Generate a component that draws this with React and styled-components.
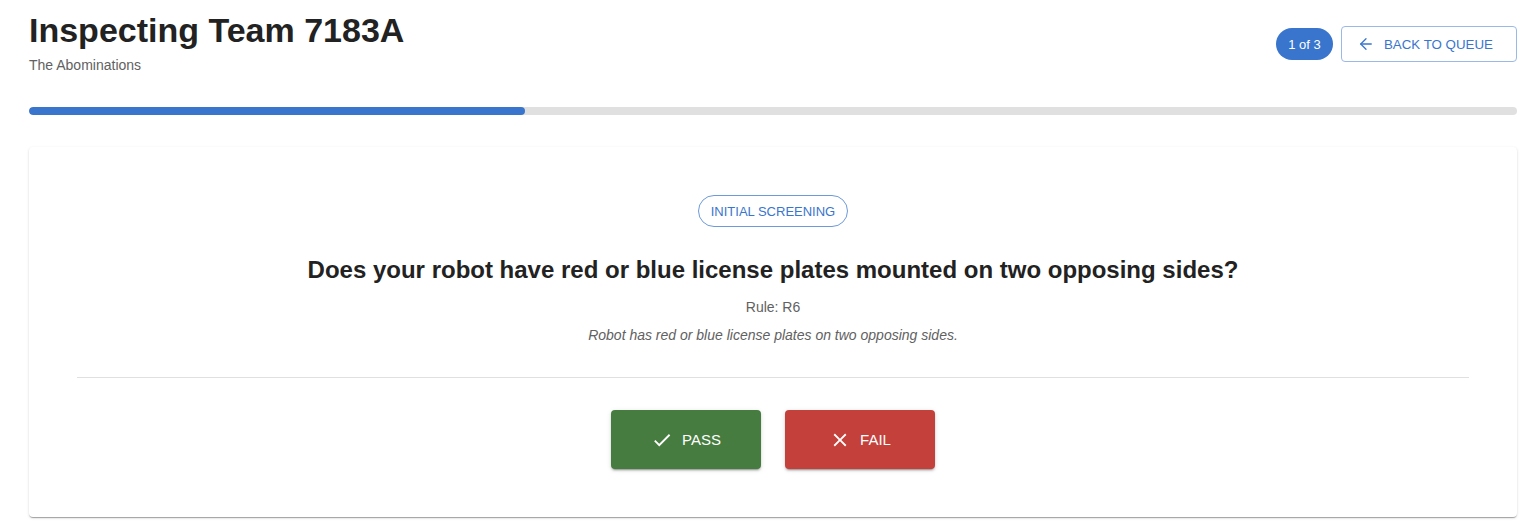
import React from 'react'
import styled, { createGlobalStyle } from 'styled-components'
import { ArrowLeft } from 'lucide-react'

const GlobalStyle = createGlobalStyle`
  body {
    margin: 0;
    background: #ffffff;
    font-family: "Liberation Sans", Arial, sans-serif;
    color: #222222;
  }
`;

const Page = styled.div`
  padding: 9px 19px 15px 29px;
`;

const Header = styled.div`
  display: flex;
  justify-content: space-between;
  align-items: flex-start;
`;

const TitleBlock = styled.div`
  display: flex;
  flex-direction: column;
  gap: 4px;
`;

const Title = styled.h1`
  margin: 0;
  font-size: 34px;
  line-height: 42px;
  font-weight: 700;
  color: #222222;
`;

const Subtitle = styled.div`
  font-size: 14px;
  line-height: 20px;
  color: #616161;
`;

const Actions = styled.div`
  display: flex;
  align-items: center;
  gap: 8px;
  margin-top: 17px;
`;

const CountChip = styled.span`
  display: inline-flex;
  align-items: center;
  justify-content: center;
  height: 32px;
  width: 57px;
  border-radius: 16px;
  background: #3975cd;
  color: #ffffff;
  font-size: 13px;
`;

const OutlineButton = styled.button`
  display: inline-flex;
  align-items: center;
  gap: 9px;
  height: 36px;
  width: 176px;
  padding: 0 15px;
  border: 1px solid #9bb9e6;
  border-radius: 4px;
  background: #ffffff;
  color: #3975cd;
  font-family: "Liberation Sans", Arial, sans-serif;
  font-size: 13.3px;
  text-transform: uppercase;
  cursor: pointer;
`;

const Progress = styled.div`
  margin-top: 32px;
  height: 8px;
  border-radius: 4px;
  background: #e0e0e0;
  overflow: hidden;
`;

const ProgressFill = styled.div`
  height: 100%;
  background: #3975cd;
  border-radius: 4px;
`;

const Card = styled.div`
  margin-top: 32px;
  background: #ffffff;
  border-radius: 4px;
  box-shadow: 0 2px 1px -1px rgba(0,0,0,0.2), 0 1px 1px 0 rgba(0,0,0,0.14), 0 1px 3px 0 rgba(0,0,0,0.12);
  padding: 48px;
  display: flex;
  flex-direction: column;
  align-items: center;
`;

const CategoryChip = styled.span`
  display: inline-flex;
  align-items: center;
  height: 32px;
  padding: 0 12px;
  box-sizing: border-box;
  border: 1px solid #6d9ad9;
  border-radius: 16px;
  color: #3975cd;
  font-size: 13px;
  text-transform: uppercase;
`;

const Question = styled.h2`
  margin: 27px 0 0;
  font-size: 24px;
  line-height: 32px;
  font-weight: 700;
  color: #222222;
  text-align: center;
`;

const Rule = styled.div`
  margin-top: 11px;
  font-size: 14px;
  line-height: 20px;
  color: #616161;
`;

const Description = styled.div`
  margin-top: 8px;
  font-size: 14px;
  line-height: 20px;
  font-style: italic;
  color: #616161;
`;

const Divider = styled.hr`
  align-self: stretch;
  margin: 32px 0 32px;
  border: none;
  border-top: 1px solid #e0e0e0;
`;

const ButtonRow = styled.div`
  display: flex;
  gap: 24px;
`;

const VerdictButton = styled.button`
  display: inline-flex;
  align-items: center;
  justify-content: center;
  gap: 9px;
  width: 150px;
  height: 59px;
  border: none;
  border-radius: 4px;
  background: ${p => p.$tone === 'pass' ? '#467c3f' : '#c4403a'};
  color: #ffffff;
  font-family: "Liberation Sans", Arial, sans-serif;
  font-size: 15px;
  text-transform: uppercase;
  box-shadow: 0 3px 1px -2px rgba(0,0,0,0.2), 0 2px 2px 0 rgba(0,0,0,0.14), 0 1px 5px 0 rgba(0,0,0,0.12);
  cursor: pointer;
`;

const CheckIcon = () => (
  <svg width="22" height="22" viewBox="0 0 24 24" fill="currentColor">
    <path d="M9 16.17 4.83 12l-1.42 1.41L9 19 21 7l-1.41-1.41z" />
  </svg>
)

const CloseIcon = () => (
  <svg width="22" height="22" viewBox="0 0 24 24" fill="currentColor">
    <path d="M19 6.41 17.59 5 12 10.59 6.41 5 5 6.41 10.59 12 5 17.59 6.41 19 12 13.41 17.59 19 19 17.59 13.41 12z" />
  </svg>
)

const App = () => {
  const current = 1
  const total = 3
  return <>
    <GlobalStyle />
    <Page>
      <Header>
        <TitleBlock>
          <Title>Inspecting Team 7183A</Title>
          <Subtitle>The Abominations</Subtitle>
        </TitleBlock>
        <Actions>
          <CountChip>{current} of {total}</CountChip>
          <OutlineButton><ArrowLeft size={18} strokeWidth={1.75} />Back to Queue</OutlineButton>
        </Actions>
      </Header>
      <Progress>
        <ProgressFill style={{ width: `${(current / total) * 100}%` }} />
      </Progress>
      <Card>
        <CategoryChip>Initial Screening</CategoryChip>
        <Question>Does your robot have red or blue license plates mounted on two opposing sides?</Question>
        <Rule>Rule: R6</Rule>
        <Description>Robot has red or blue license plates on two opposing sides.</Description>
        <Divider />
        <ButtonRow>
          <VerdictButton $tone="pass"><CheckIcon />Pass</VerdictButton>
          <VerdictButton $tone="fail"><CloseIcon />Fail</VerdictButton>
        </ButtonRow>
      </Card>
    </Page>
  </>
}

export default App
